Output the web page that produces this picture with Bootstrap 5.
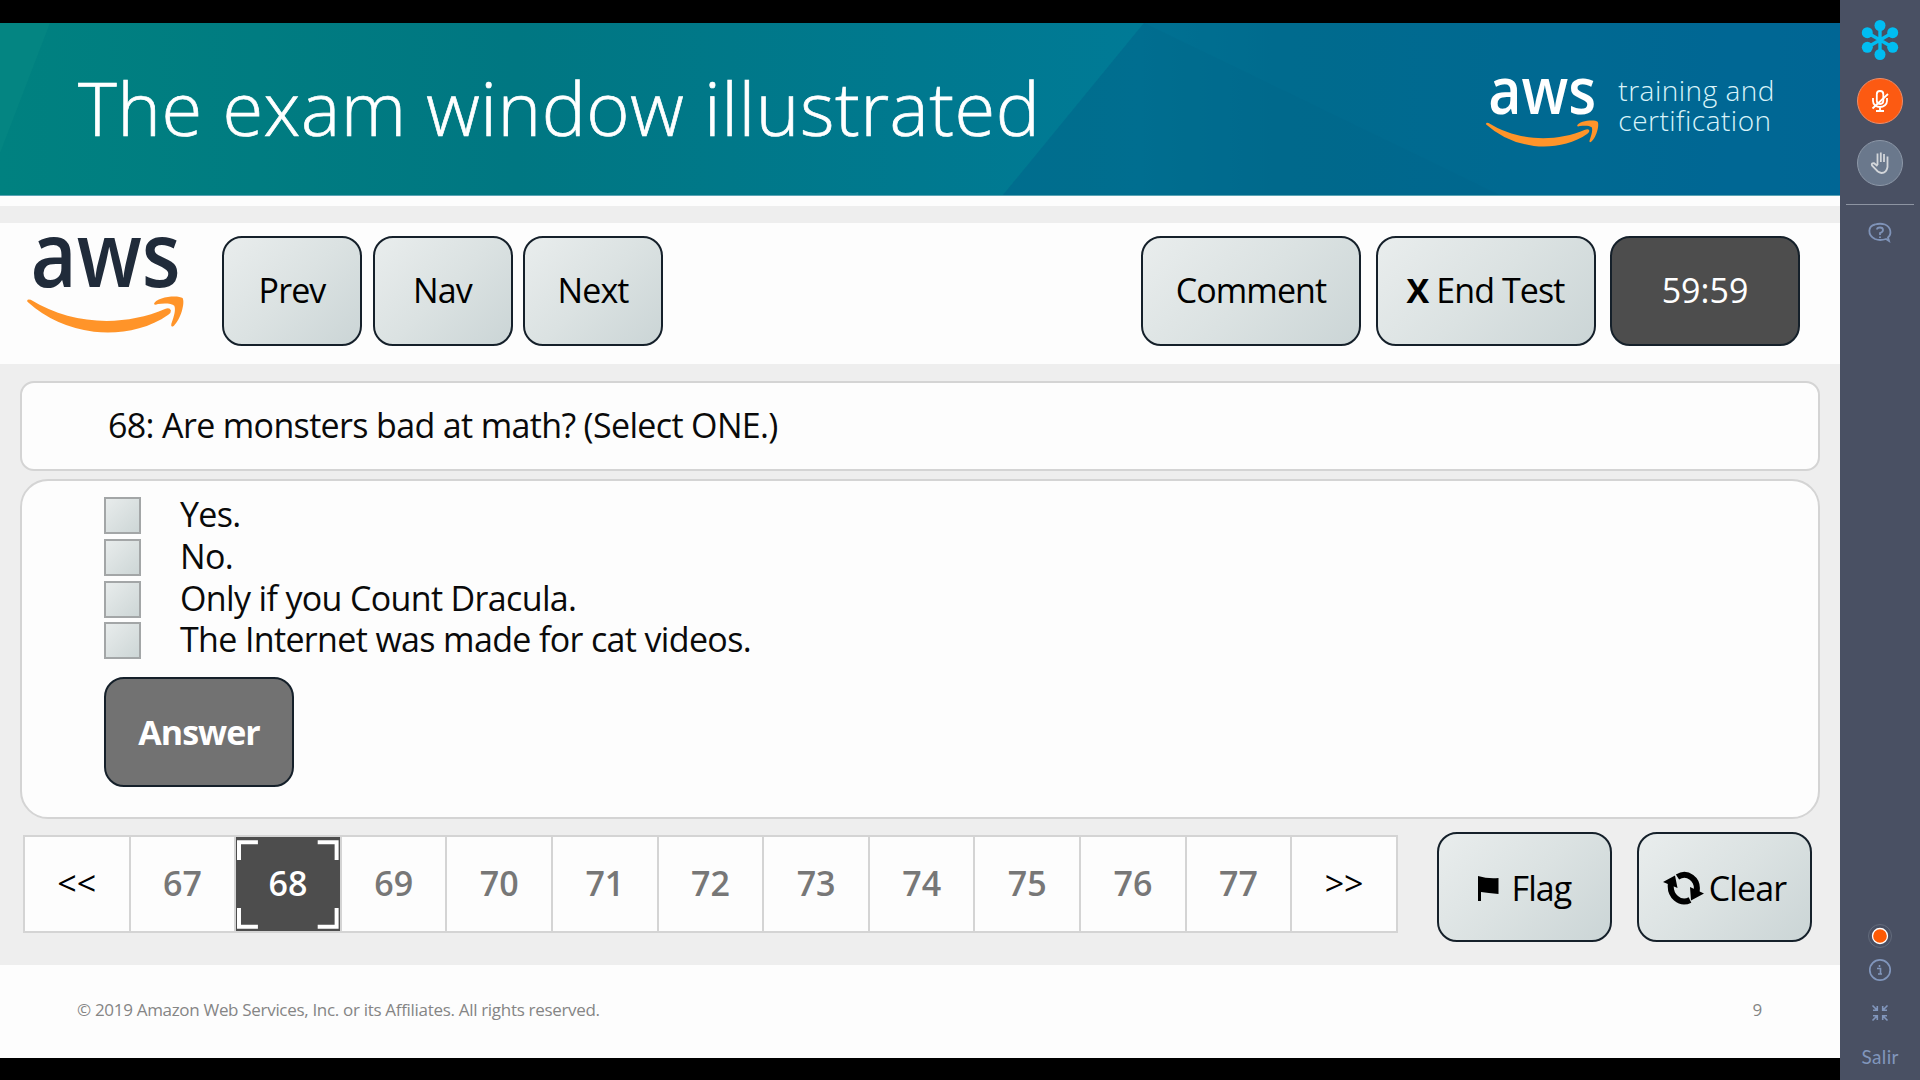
<!DOCTYPE html>
<html lang="en">
<head>
<meta charset="utf-8">
<title>The exam window illustrated</title>
<link href="https://cdn.jsdelivr.net/npm/bootstrap@5.3.0/dist/css/bootstrap.min.css" rel="stylesheet">
<script src="https://cdn.jsdelivr.net/npm/bootstrap@5.3.0/dist/js/bootstrap.bundle.min.js"></script>
<style>
body{width:1920px;height:1080px;overflow:hidden;background:#000;font-family:"Open Sans","Noto Sans",sans-serif;color:#0a0a0a}
.stage{width:1840px;padding:23px 0 22px}
.banner{height:173px;flex:none;position:relative;border-bottom:1px solid #5aa3b4;padding:0 65px 0 78px;background:linear-gradient(90deg,#008180 0,#007782 28%,#00798f 50%,#007a96 62%,#00708f 70%,#006e94 82%,#00699a 100%)}
.banner-art{position:absolute;inset:0;width:100%;height:100%}
.banner h1{position:relative;padding-top:48px;font-size:74px;font-weight:300;line-height:1;color:#fff;letter-spacing:.52px;white-space:nowrap;-webkit-text-stroke:.7px #fff}
.brand-sub{margin-left:16px;font-size:28px;line-height:30px;font-weight:300;color:#d9f4fa;letter-spacing:.5px}
.brand{padding-top:52px}
.main-logo{margin:-3px 34px 0 0;color:#202b3a}
.strip{height:17px;margin-top:10px;background:#eee}
.sheet{background:#fdfdfd}
.toolbar-row{height:141px;padding:13px 40px 0 25px}
.exam-btn{height:110px;border:2px solid #15202a;border-radius:20px;background:linear-gradient(135deg,#e9eded,#dbe2e2 50%,#cbd5d6);font-size:34px;line-height:1;color:#000;padding:0 0 2px;white-space:nowrap;letter-spacing:-.9px}
.b-sm{width:140px}.b-md{width:220px}.b-timer{width:190px}.b-fl{width:175px}
.exam-btn.dark{background:#4d4d4d;color:#fff;letter-spacing:0}
.exam-btn.mid{margin-top:13px;background:#727272;color:#fff;font-weight:700;letter-spacing:-1px;padding-bottom:1px}
.b-fl.exam-btn{padding:2px 0 0}
.work{height:601px;background:#eee;padding:17px 20px 0}
.panel{border:2px solid #d4d4d4;background:#fdfdfd;font-size:34px;letter-spacing:-.65px}
.q-panel{height:90px;border-radius:14px;padding-left:86px;line-height:85px}
.a-panel{height:340px;margin-top:8px;border-radius:28px;padding:16px 0 0 82px}
.opt{height:41.8px;gap:39px}
.box{width:37px;height:37px;border:2px solid #a3a6a7;background:linear-gradient(135deg,#e8ecec,#cdd6d6)}
.opt span{line-height:37px;margin-top:-1px}
.bottom-row{padding:13px 8px 0 3px}
.pager{width:1375px;height:98px;margin-top:3px;border:2px solid #d4d4d4;background:#fdfdfd;font-size:34px;font-weight:600;color:#777}
.pager>div{flex:1;position:relative;display:flex;align-items:center;justify-content:center;padding-bottom:1px}
.pager>div+div{border-left:2px solid #d4d4d4}
.pager .edge{color:#000;font-weight:400}
.pager .now{background:#4d4d4d;color:#fff}
.now svg{position:absolute;inset:0;width:100%;height:100%}
.foot{height:93px;padding:33px 78px 0 77px;font-size:17px;color:#858585;line-height:24px;letter-spacing:-.31px}
.side{width:80px;background:#495063;color:#8fa3c4}
.side svg{display:block;width:80px;height:1080px}
</style>
</head>
<body class="d-flex">
<svg width="0" height="0" class="position-absolute"><defs>
<symbol id="aws" viewBox="75 100 490 310"><text x="91" y="262" font-size="272" font-weight="600" font-family="Open Sans" fill="currentColor" textLength="452" lengthAdjust="spacingAndGlyphs">aws</text>
<path fill="#ff9429" d="M82 307Q79 297 92 301C215 377 370 383 496 329Q510 323 514 333Q515 339 506 346C440 393 355 405 282 397Q165 382 82 307ZM463 313C469 292 536 285 549 296C557 310 544 360 523 379Q513 386 515 374C524 350 529 329 524 319C516 311 491 311 475 314Q464 318 463 313Z"/></symbol>
</defs></svg>
<main class="stage d-flex flex-column">
<header class="banner d-flex justify-content-between">
<svg class="banner-art" viewBox="0 0 1840 172" preserveAspectRatio="none"><path d="M0 0H50L0 130Z" fill="#0a8c85" opacity=".4"/><path d="M1003 172L1144 0L1500 172Z" fill="#006585" opacity=".22"/><path d="M1003 172L1144 0H1840V172Z" fill="#00628c" opacity=".35"/></svg>
<h1 class="m-0 align-self-start">The exam window illustrated</h1>
<div class="brand d-flex position-relative text-white"><svg width="118" height="74"><use href="#aws"/></svg><div class="brand-sub">training and<br>certification</div></div>
</header>
<div class="sheet flex-grow-1 d-flex flex-column">
<div class="strip"></div>
<div class="toolbar-row d-flex">
<svg class="main-logo" width="163" height="103"><use href="#aws"/></svg>
<div class="d-flex" style="gap:10.5px"><button class="exam-btn b-sm">Prev</button><button class="exam-btn b-sm">Nav</button><button class="exam-btn b-sm">Next</button></div>
<div class="d-flex ms-auto" style="gap:14.5px"><button class="exam-btn b-md">Comment</button><button class="exam-btn b-md"><b>X</b> End Test</button><div class="exam-btn b-timer dark d-flex align-items-center justify-content-center">59:59</div></div>
</div>
<section class="work">
<div class="panel q-panel">68: Are monsters bad at math? (Select ONE.)</div>
<div class="panel a-panel">
<div class="opt d-flex"><i class="box"></i><span>Yes.</span></div>
<div class="opt d-flex"><i class="box"></i><span>No.</span></div>
<div class="opt d-flex"><i class="box"></i><span>Only if you Count Dracula.</span></div>
<div class="opt d-flex"><i class="box"></i><span>The Internet was made for cat videos.</span></div>
<button class="exam-btn b-timer mid">Answer</button>
</div>
<div class="bottom-row d-flex">
<nav class="pager d-flex"><div class="edge">&lt;&lt;</div><div>67</div><div class="now">68<svg viewBox="0 0 104 94"><path d="M3 23V5H22M82 5H101V23M101 71V90H82M22 90H3V71" fill="none" stroke="#fff" stroke-width="4"/></svg></div><div>69</div><div>70</div><div>71</div><div>72</div><div>73</div><div>74</div><div>75</div><div>76</div><div>77</div><div class="edge">&gt;&gt;</div></nav>
<div class="d-flex ms-auto" style="gap:25px"><button class="exam-btn b-fl"><svg class="me-1 align-baseline" width="22" height="25" viewBox="0 0 22 25"><path d="M0 0Q10 3 20.500 2V18Q10 17 3 16V25H0Z"/></svg> Flag</button><button class="exam-btn b-fl"><svg style="margin:-7px -3px 0 0" width="41" height="34" viewBox="0 0 41 34"><g fill="none" stroke="#000" stroke-width="6"><path d="M14.500 6C24 0 36 8 33.500 21"/><path d="M27 29C17 34 6 25 8 12"/></g><path d="M27 16L41 22.500L28 29.500ZM0 11L12 4.500L14.500 17Z"/></svg> Clear</button></div>
</div>
</section>
<footer class="foot d-flex justify-content-between"><span>© 2019 Amazon Web Services, Inc. or its Affiliates. All rights reserved.</span><span>9</span></footer>
</div>
</main>
<aside class="side">
<svg viewBox="0 0 80 1080">
<g fill="#00bdf2" stroke="#00bdf2" stroke-width="3.4"><path d="M40 25V55M27 32.500L53 47.500M27 47.500L53 32.500"/><g stroke="none"><circle cx="40" cy="25.500" r="5.500"/><circle cx="40" cy="54.500" r="5.500"/><circle cx="27.300" cy="32.700" r="5.500"/><circle cx="52.700" cy="32.700" r="5.500"/><circle cx="27.300" cy="47.300" r="5.500"/><circle cx="52.700" cy="47.300" r="5.500"/></g></g>
<circle cx="40" cy="101" r="22.500" fill="#fc5a12" stroke="#ee8d68"/>
<g fill="none" stroke="#fff" stroke-width="1.800"><rect x="36.800" y="91" width="6.500" height="13" rx="3.200"/><path d="M33 98V101A7 6 0 0 0 47 101V98M40 107V111M36 111H44M32.500 108.500L48 94"/></g>
<circle cx="40" cy="163" r="22.500" fill="#6a788c" stroke="#8d98a8"/>
<path d="M37.500 165V153.500M40.800 162V152.500M44 162V154M47.500 156.500V167Q46.500 173 41.500 173Q38.500 173 35.500 169L32 165.500Q31 163 34 163.200L37.500 166" fill="none" stroke="#d3d6da" stroke-width="1.800"/>
<path d="M6 204.500H74" stroke="#8d94a2"/>
<g fill="none" stroke="#7f93b8" stroke-width="1.800"><path d="M46 239Q40 241 35 239C27 235 28 226 35 224.500Q40 223 45 224.500C51 227 52 234 48 237.500L49 241Z"/><path d="M37 229.500Q37 227.500 40 227.500T43 230Q43 232 40 233V235M40 236.500V238"/></g>
<circle cx="40" cy="936" r="11.500" fill="none" stroke="#636b7c"/><circle cx="40" cy="936" r="7.500" fill="#fc5a05" stroke="#fff" stroke-width="1.300"/>
<circle cx="40" cy="970" r="10.200" fill="none" stroke="#8196bc" stroke-width="1.700"/>
<path d="M37 968.500H40.500V974M38 974H42M39.500 965V967" fill="none" stroke="#8196bc" stroke-width="1.600"/>
<path d="M32.500 1005.500L37 1010M37.300 1006V1010.300H33M47.500 1005.500L43 1010M42.700 1006V1010.300H47M32.500 1020.500L37 1016M37.300 1020V1015.700H33M47.500 1020.500L43 1016M42.700 1020V1015.700H47" fill="none" stroke="#8196bc" stroke-width="1.600"/>
<text x="40" y="1064" text-anchor="middle" font-family="Lato" font-size="19" fill="#8196bc" textLength="37">Salir</text>
</svg>
</aside>
</body>
</html>
